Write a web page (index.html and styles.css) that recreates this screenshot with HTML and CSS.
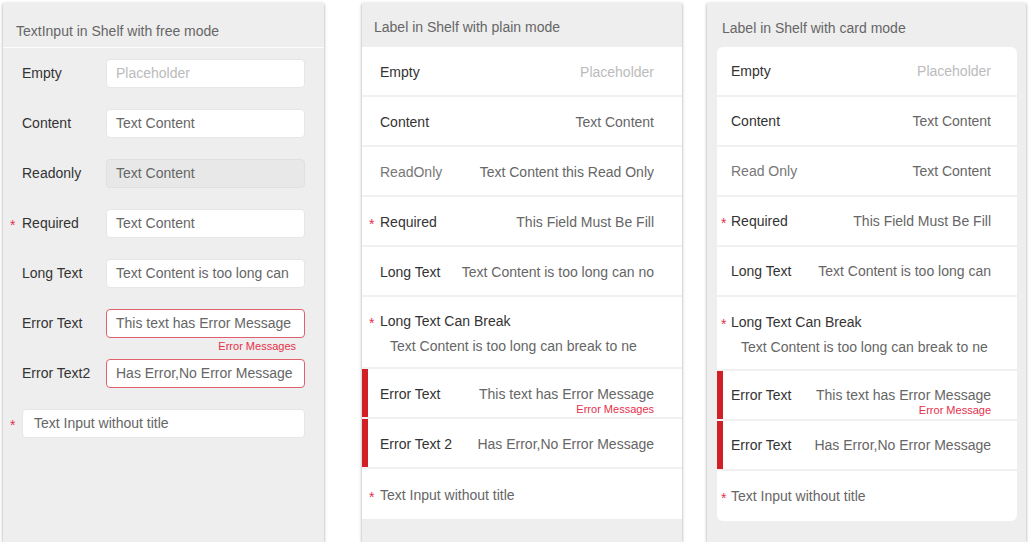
FILE: index.html
```html
<!DOCTYPE html>
<html>
<head>
<meta charset="utf-8">
<title>Shelf modes</title>
<link rel="stylesheet" href="styles.css">
</head>
<body>
<div class="page">
  <section class="shelf shelf-free">
    <header class="shelf-title title-free">TextInput in Shelf with free mode</header>
    <div class="free-list">
      <div class="free-row"><span class="mark"></span><span class="free-label">Empty</span><div class="field-wrap"><div class="field"><span class="placeholder">Placeholder</span></div></div></div>
      <div class="free-row"><span class="mark"></span><span class="free-label">Content</span><div class="field-wrap"><div class="field">Text Content</div></div></div>
      <div class="free-row"><span class="mark"></span><span class="free-label">Readonly</span><div class="field-wrap"><div class="field field-readonly">Text Content</div></div></div>
      <div class="free-row"><span class="mark">*</span><span class="free-label">Required</span><div class="field-wrap"><div class="field">Text Content</div></div></div>
      <div class="free-row"><span class="mark"></span><span class="free-label">Long Text</span><div class="field-wrap"><div class="field">Text Content is too long can</div></div></div>
      <div class="free-row"><span class="mark"></span><span class="free-label">Error Text</span><div class="field-wrap"><div class="field field-error">This text has Error Message</div><span class="free-msg">Error Messages</span></div></div>
      <div class="free-row"><span class="mark"></span><span class="free-label">Error Text2</span><div class="field-wrap"><div class="field field-error">Has Error,No Error Message</div></div></div>
      <div class="free-row"><span class="mark">*</span><div class="field-wrap wide"><div class="field field-wide">Text Input without title</div></div></div>
    </div>
  </section>

  <section class="shelf shelf-plain">
    <header class="shelf-title title-plain">Label in Shelf with plain mode</header>
    <div class="plain-list">
      <div class="row"><span class="mark2"></span><span class="label">Empty</span><div class="value"><span class="value-text placeholder">Placeholder</span></div></div>
      <div class="row"><span class="mark2"></span><span class="label">Content</span><div class="value"><span class="value-text">Text Content</span></div></div>
      <div class="row"><span class="mark2"></span><span class="label label-readonly">ReadOnly</span><div class="value"><span class="value-text">Text Content this Read Only</span></div></div>
      <div class="row"><span class="mark2">*</span><span class="label">Required</span><div class="value"><span class="value-text">This Field Must Be Fill</span></div></div>
      <div class="row"><span class="mark2"></span><span class="label">Long Text</span><div class="value"><span class="value-text">Text Content is too long can no</span></div></div>
      <div class="row row-break">
        <div class="break-head"><span class="mark2">*</span><span class="label">Long Text Can Break</span></div>
        <div class="break-value">Text Content is too long can break to ne</div>
      </div>
      <div class="row row-error"><span class="mark2"></span><span class="label">Error Text</span><div class="value"><span class="value-text">This text has Error Message</span><span class="msg">Error Messages</span></div></div>
      <div class="row row-error"><span class="mark2"></span><span class="label">Error Text 2</span><div class="value"><span class="value-text">Has Error,No Error Message</span></div></div>
      <div class="row row-last"><span class="mark2">*</span><span class="untitled">Text Input without title</span></div>
    </div>
  </section>

  <section class="shelf shelf-card">
    <header class="shelf-title title-card">Label in Shelf with card mode</header>
    <div class="card">
      <div class="row"><span class="mark3"></span><span class="label">Empty</span><div class="value"><span class="value-text placeholder">Placeholder</span></div></div>
      <div class="row"><span class="mark3"></span><span class="label">Content</span><div class="value"><span class="value-text">Text Content</span></div></div>
      <div class="row"><span class="mark3"></span><span class="label label-readonly">Read Only</span><div class="value"><span class="value-text">Text Content</span></div></div>
      <div class="row"><span class="mark3">*</span><span class="label">Required</span><div class="value"><span class="value-text">This Field Must Be Fill</span></div></div>
      <div class="row"><span class="mark3"></span><span class="label">Long Text</span><div class="value"><span class="value-text">Text Content is too long can</span></div></div>
      <div class="row row-break">
        <div class="break-head"><span class="mark3">*</span><span class="label">Long Text Can Break</span></div>
        <div class="break-value">Text Content is too long can break to ne</div>
      </div>
      <div class="row row-error"><span class="mark3"></span><span class="label">Error Text</span><div class="value"><span class="value-text">This text has Error Message</span><span class="msg">Error Message</span></div></div>
      <div class="row row-error"><span class="mark3"></span><span class="label">Error Text</span><div class="value"><span class="value-text">Has Error,No Error Message</span></div></div>
      <div class="row row-last"><span class="mark3">*</span><span class="untitled">Text Input without title</span></div>
    </div>
  </section>
</div>
</body>
</html>
```

FILE: styles.css
```css
* { box-sizing: border-box; }

html, body {
  margin: 0;
  padding: 0;
  background: #ffffff;
}

body {
  font-family: "Liberation Sans", Arial, sans-serif;
  font-size: 14px;
  line-height: 20px;
  color: #333333;
}

.page {
  display: flex;
  align-items: flex-start;
  padding: 3px 0 0 3px;
}

.shelf {
  height: 539px;
  background: #eeeeee;
  box-shadow: 0 1px 3px rgba(0, 0, 0, 0.38);
  display: flex;
  flex-direction: column;
}

.shelf-free { width: 321px; }
.shelf-plain { width: 320px; margin-left: 38px; }
.shelf-card { width: 319px; margin-left: 25px; }

.shelf-title {
  color: #666666;
  font-size: 14px;
  line-height: 20px;
  white-space: nowrap;
}

.title-free {
  padding: 18px 0 6px 13px;
  border-bottom: 1px solid #fbfbfb;
}

.title-plain {
  padding: 14px 0 10px 12px;
}

.title-card {
  padding: 15px 0 9px 15px;
}

/* ---------- free mode ---------- */
.free-row {
  height: 50px;
  display: flex;
  align-items: center;
}

.mark {
  flex: none;
  width: 19px;
  padding-left: 7px;
  color: #e5304b;
  font-size: 14px;
  line-height: 20px;
  position: relative;
  top: 2px;
}

.free-label {
  flex: none;
  width: 84px;
  color: #333333;
  white-space: nowrap;
}

.field-wrap {
  position: relative;
  width: 199px;
  flex: none;
}

.field-wrap.wide { width: 283px; }

.field {
  height: 29px;
  display: flex;
  align-items: center;
  padding: 0 9px;
  background: #ffffff;
  border: 1px solid #e6e6e6;
  border-radius: 4px;
  color: #666666;
  white-space: nowrap;
  overflow: hidden;
}

.field-readonly {
  background: #e8e8e8;
  border-color: #e0e0e0;
}

.field-error {
  border-color: #e2606c;
}

.field-wide {
  padding-left: 11px;
}

.placeholder { color: #bbbbbb; }

.free-msg {
  position: absolute;
  top: calc(100% + 2px);
  right: 9px;
  font-size: 11px;
  line-height: 13px;
  color: #e5304b;
  white-space: nowrap;
}

/* ---------- plain / card rows ---------- */
.plain-list {
  background: #ffffff;
}

.row {
  min-height: 50px;
  display: flex;
  align-items: center;
  border-bottom: 2px solid #f1f1f1;
}

.plain-list .row { padding: 1px 28px 0 7px; }
.card .row { padding: 0 26px 0 4px; }

.row-last { border-bottom: 0; }

.row-error {
  box-shadow: inset 6px 0 0 #d11f26;
}

.mark2, .mark3 {
  flex: none;
  color: #e5304b;
  position: relative;
  top: 2px;
}
.mark2 { width: 11px; }
.mark3 { width: 10px; }

.label {
  flex: none;
  color: #333333;
  white-space: nowrap;
}

.label-readonly { color: #777777; }

.value {
  flex: 1;
  min-width: 0;
  margin-left: 11px;
  position: relative;
  text-align: right;
}

.value-text {
  display: block;
  color: #666666;
  white-space: nowrap;
  overflow: hidden;
}

.value-text.placeholder { color: #bbbbbb; }

.msg {
  position: absolute;
  top: calc(100% - 1px);
  right: 0;
  font-size: 11px;
  line-height: 13px;
  color: #e5304b;
  white-space: nowrap;
}

.row-break {
  flex-direction: column;
  align-items: stretch;
  padding-top: 14px !important;
  padding-bottom: 11px !important;
  min-height: 72px;
  gap: 5px;
}

.card .row-break {
  padding-top: 15px !important;
  padding-bottom: 12px !important;
  min-height: 74px;
}

.break-head {
  display: flex;
  align-items: center;
}

.plain-list .break-value { padding-left: 21px; }
.card .break-value { padding-left: 20px; }

.break-value {
  color: #666666;
  white-space: nowrap;
  overflow: hidden;
}

.untitled {
  color: #666666;
  white-space: nowrap;
}

/* ---------- card mode ---------- */
.card {
  margin: 0 9px 0 10px;
  background: #ffffff;
  border-radius: 6px;
  overflow: hidden;
}
```
